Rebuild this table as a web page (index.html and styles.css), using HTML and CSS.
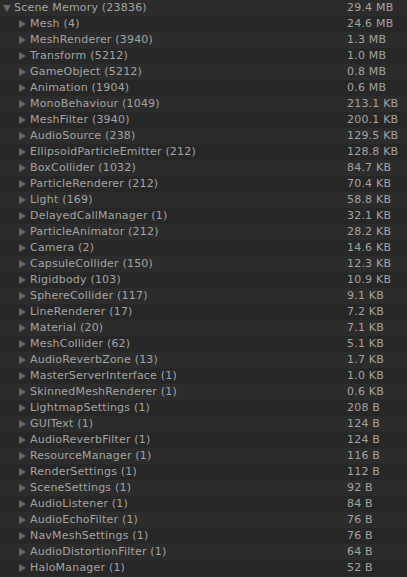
FILE: index.html
```html
<!DOCTYPE html>
<html>
<head>
  <title>Memory Profiler</title>
  <link rel="stylesheet" href="styles.css">
</head>
<body>
  <div class="tree">
    <div class="row root"><span class="name"><span class="arrow open"></span>Scene Memory (23836)</span><span class="size">29.4 MB</span></div>
    <div class="row"><span class="name"><span class="arrow"></span>Mesh (4)</span><span class="size">24.6 MB</span></div>
    <div class="row"><span class="name"><span class="arrow"></span>MeshRenderer (3940)</span><span class="size">1.3 MB</span></div>
    <div class="row"><span class="name"><span class="arrow"></span>Transform (5212)</span><span class="size">1.0 MB</span></div>
    <div class="row"><span class="name"><span class="arrow"></span>GameObject (5212)</span><span class="size">0.8 MB</span></div>
    <div class="row"><span class="name"><span class="arrow"></span>Animation (1904)</span><span class="size">0.6 MB</span></div>
    <div class="row"><span class="name"><span class="arrow"></span>MonoBehaviour (1049)</span><span class="size">213.1 KB</span></div>
    <div class="row"><span class="name"><span class="arrow"></span>MeshFilter (3940)</span><span class="size">200.1 KB</span></div>
    <div class="row"><span class="name"><span class="arrow"></span>AudioSource (238)</span><span class="size">129.5 KB</span></div>
    <div class="row"><span class="name"><span class="arrow"></span>EllipsoidParticleEmitter (212)</span><span class="size">128.8 KB</span></div>
    <div class="row"><span class="name"><span class="arrow"></span>BoxCollider (1032)</span><span class="size">84.7 KB</span></div>
    <div class="row"><span class="name"><span class="arrow"></span>ParticleRenderer (212)</span><span class="size">70.4 KB</span></div>
    <div class="row"><span class="name"><span class="arrow"></span>Light (169)</span><span class="size">58.8 KB</span></div>
    <div class="row"><span class="name"><span class="arrow"></span>DelayedCallManager (1)</span><span class="size">32.1 KB</span></div>
    <div class="row"><span class="name"><span class="arrow"></span>ParticleAnimator (212)</span><span class="size">28.2 KB</span></div>
    <div class="row"><span class="name"><span class="arrow"></span>Camera (2)</span><span class="size">14.6 KB</span></div>
    <div class="row"><span class="name"><span class="arrow"></span>CapsuleCollider (150)</span><span class="size">12.3 KB</span></div>
    <div class="row"><span class="name"><span class="arrow"></span>Rigidbody (103)</span><span class="size">10.9 KB</span></div>
    <div class="row"><span class="name"><span class="arrow"></span>SphereCollider (117)</span><span class="size">9.1 KB</span></div>
    <div class="row"><span class="name"><span class="arrow"></span>LineRenderer (17)</span><span class="size">7.2 KB</span></div>
    <div class="row"><span class="name"><span class="arrow"></span>Material (20)</span><span class="size">7.1 KB</span></div>
    <div class="row"><span class="name"><span class="arrow"></span>MeshCollider (62)</span><span class="size">5.1 KB</span></div>
    <div class="row"><span class="name"><span class="arrow"></span>AudioReverbZone (13)</span><span class="size">1.7 KB</span></div>
    <div class="row"><span class="name"><span class="arrow"></span>MasterServerInterface (1)</span><span class="size">1.0 KB</span></div>
    <div class="row"><span class="name"><span class="arrow"></span>SkinnedMeshRenderer (1)</span><span class="size">0.6 KB</span></div>
    <div class="row"><span class="name"><span class="arrow"></span>LightmapSettings (1)</span><span class="size">208 B</span></div>
    <div class="row"><span class="name"><span class="arrow"></span>GUIText (1)</span><span class="size">124 B</span></div>
    <div class="row"><span class="name"><span class="arrow"></span>AudioReverbFilter (1)</span><span class="size">124 B</span></div>
    <div class="row"><span class="name"><span class="arrow"></span>ResourceManager (1)</span><span class="size">116 B</span></div>
    <div class="row"><span class="name"><span class="arrow"></span>RenderSettings (1)</span><span class="size">112 B</span></div>
    <div class="row"><span class="name"><span class="arrow"></span>SceneSettings (1)</span><span class="size">92 B</span></div>
    <div class="row"><span class="name"><span class="arrow"></span>AudioListener (1)</span><span class="size">84 B</span></div>
    <div class="row"><span class="name"><span class="arrow"></span>AudioEchoFilter (1)</span><span class="size">76 B</span></div>
    <div class="row"><span class="name"><span class="arrow"></span>NavMeshSettings (1)</span><span class="size">76 B</span></div>
    <div class="row"><span class="name"><span class="arrow"></span>AudioDistortionFilter (1)</span><span class="size">64 B</span></div>
    <div class="row"><span class="name"><span class="arrow"></span>HaloManager (1)</span><span class="size">52 B</span></div>
  </div>
</body>
</html>
```

FILE: styles.css
```css
body {
  margin: 0;
  background-color: #282828;
  color: #a3a3a3;
  font-family: 'DejaVu Sans', Verdana, sans-serif;
  font-size: 11px;
  letter-spacing: 0.2px;
}
.tree {
  display: flex;
  flex-direction: column;
}
.row {
  display: grid;
  grid-template-columns: 1fr 60px;
  height: 16px;
  line-height: 16px;
  white-space: nowrap;
}
.row:nth-child(odd) {
  background-color: #2c2c2c;
}
.row:nth-child(even) {
  background-color: #272727;
}
.name {
  display: flex;
  align-items: center;
  padding-left: 19px;
}
.root .name {
  padding-left: 3px;
}
.arrow {
  width: 0;
  height: 0;
  margin-right: 4px;
  border-top: 4px solid transparent;
  border-bottom: 4px solid transparent;
  border-left: 7px solid #686868;
}
.arrow.open {
  margin-right: 3px;
  border-left: 4px solid transparent;
  border-right: 4px solid transparent;
  border-top: 7px solid #686868;
  border-bottom: 0;
}
```
